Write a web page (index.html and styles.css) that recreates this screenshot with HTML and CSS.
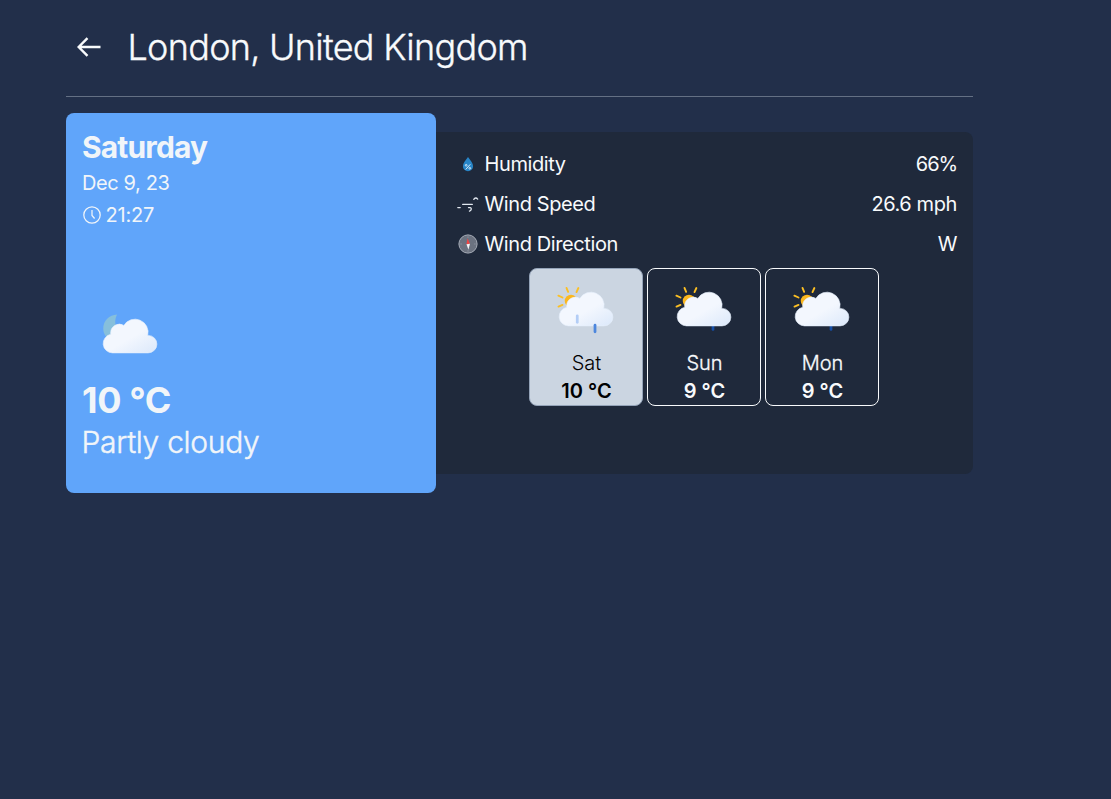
FILE: index.html
```
<!DOCTYPE html>
<html lang="en">
<head>
<meta charset="utf-8">
<title>Weather</title>
<link rel="stylesheet" href="styles.css">
</head>
<body>
<svg class="defs" aria-hidden="true">
  <defs>
    <linearGradient id="cloud-fill" gradientUnits="userSpaceOnUse" x1="22.56" y1="21.96" x2="39.2" y2="50.8">
      <stop offset="0" stop-color="#f3f7fe"/><stop offset=".45" stop-color="#f3f7fe"/><stop offset="1" stop-color="#deeafb"/>
    </linearGradient>
    <symbol id="cloud" viewBox="0 0 64 64">
      <path d="M46.5 31.5h-.32a10.49 10.49 0 0 0-19.11-8 7 7 0 0 0-10.57 6 7.21 7.21 0 0 0 .1 1.14A7.5 7.5 0 0 0 18 45.5h28.5a7 7 0 0 0 0-14z" fill="url(#cloud-fill)" stroke="#e6effc" stroke-width=".5"/>
    </symbol>
    <symbol id="sun" viewBox="0 0 64 64">
      <circle cx="20" cy="25.6" r="5" fill="#fbb71e"/>
      <path d="M17.7 18.3l-1.3-3.2M24.4 18.5l1.5-3.3M13.2 22.8l-3.3-1.5M13.2 28.7l-3.2 1.4" fill="none" stroke="#fbbf24" stroke-width="1.5" stroke-linecap="round"/>
    </symbol>
  </defs>
</svg>
<main class="page">
  <header class="header">
    <svg class="back" viewBox="0 0 24 24"><path d="M23.5 12H1.5M10.500 3.2L1.7 12l8.800 8.800" fill="none" stroke="currentColor" stroke-width="2.400"/></svg>
    <h1 class="title">London, United Kingdom</h1>
  </header>
  <section class="weather">
    <div class="today">
      <div>
        <h2 class="weekday">Saturday</h2>
        <p class="date">Dec 9, 23</p>
        <p class="time"><svg class="clock" viewBox="0 0 20 20" fill="none" stroke="currentColor" stroke-width="1.25"><circle cx="10" cy="10" r="8.2"/><path d="M10 5v5.4l2.6 3.1"/></svg>21:27</p>
      </div>
      <div>
        <svg class="now-icon" viewBox="0 0 64 64">
          <path d="M21.6 14.8C15.4 15.2 10.6 19.8 10.6 26c0 3 1.1 5.4 3 7.2l13-3.2c-5.800-2.500-8.200-8.500-5-15.200z" fill="#86bfdc"/>
          <use href="#cloud"/>
        </svg>
        <p class="temp">10 °C</p>
        <p class="condition">Partly cloudy</p>
      </div>
    </div>
    <div class="details">
      <div class="row"><span class="label"><svg class="icon" viewBox="0 0 24 24"><path d="M12 5C9.500 8.300 6.900 11.500 6.900 14.200a5.100 5.100 0 0 0 10.200 0C17.100 11.500 14.500 8.300 12 5z" fill="#2885c7"/><path d="M14.300 12.300l-4.600 5.200" stroke="#fff" stroke-width=".8"/><circle cx="10.200" cy="13.300" r=".9" fill="none" stroke="#fff" stroke-width=".7"/><circle cx="13.800" cy="16.300" r=".9" fill="none" stroke="#fff" stroke-width=".7"/></svg>Humidity</span><span class="percent">66%</span></div>
      <div class="row"><span class="label"><svg class="icon" viewBox="0 0 24 24" fill="none" stroke="#e2e8f0" stroke-width="1.300" stroke-linecap="round"><path d="M6.700 12.400H16.300M1.800 15.600h2.400M12.500 15.600h1.600c1.700 0 1.600 2.800-.600 3.600M17.800 7.400c1-1.900 2.700-1.700 3.900-.300"/></svg>Wind Speed</span><span>26.6 mph</span></div>
      <div class="row"><span class="label"><svg class="icon" viewBox="0 0 24 24"><circle cx="12" cy="12" r="9.100" fill="#6b7280" stroke="#a7adb8" stroke-width="1"/><path d="M12 4.500v1.200M12 18.300v1.200M4.500 12h1.200M18.300 12h1.200" stroke="#9ca3af" stroke-width=".8"/><path d="M11.500 6.200l2.500 5.600-3.500.500z" fill="#ef4444"/><path d="M12.400 17.800l1.600-6-3.500.500z" fill="#f3f4f6"/></svg>Wind Direction</span><span>W</span></div>
      <div class="forecast">
        <div class="day day-active">
          <svg class="day-icon" viewBox="0 0 64 64"><use href="#sun"/><use href="#cloud"/><path d="M25 37.400v5.200" stroke="#b3cdf6" stroke-width="2.200" stroke-linecap="round"/><path d="M39.200 44.900v5.300" stroke="#4c86dd" stroke-width="2.200" stroke-linecap="round"/></svg>
          <span>Sat</span><strong>10 °C</strong>
        </div>
        <div class="day">
          <svg class="day-icon" viewBox="0 0 64 64"><use href="#sun"/><path d="M39.200 43v5.300" stroke="#154ea6" stroke-width="2.200" stroke-linecap="round"/><use href="#cloud"/></svg>
          <span>Sun</span><strong>9 °C</strong>
        </div>
        <div class="day">
          <svg class="day-icon" viewBox="0 0 64 64"><use href="#sun"/><path d="M39.200 43v5.300" stroke="#154ea6" stroke-width="2.200" stroke-linecap="round"/><use href="#cloud"/></svg>
          <span>Mon</span><strong>9 °C</strong>
        </div>
      </div>
    </div>
  </section>
</main>
</body>
</html>
```
FILE: styles.css
```
* { box-sizing: border-box; margin: 0; }
body { background: #222f4a; color: #f8fafc; font: 300 20px/28px Inter, "Liberation Sans", sans-serif; }
svg { display: block; flex: none; }
.defs { position: absolute; width: 0; height: 0; }
.page { width: 907px; margin-left: 66px; }
.header { display: flex; align-items: center; gap: 26.5px; height: 97px; padding: 0 11px 2px; border-bottom: 1px solid #647084; }
.back { width: 24px; height: 24px; }
.title { font-size: 36px; line-height: 40px; font-weight: 300; letter-spacing: -.72px; -webkit-text-stroke: .35px currentColor; }
.weather { display: flex; align-items: center; margin-top: 16px; }
.today { display: flex; flex-direction: column; justify-content: space-between; width: 370px; height: 380px; padding: 16px 16px 32px; border-radius: 8px; background: #60a5fa; color: #f1f5f9; }
.weekday { font-size: 30px; line-height: 36px; font-weight: 700; letter-spacing: -.85px; }
.date { margin-top: 4px; font-weight: 400; letter-spacing: -.4px; }
.time { display: flex; align-items: center; gap: 3.5px; margin-top: 4px; font-weight: 400; letter-spacing: -.2px; }
.clock { width: 20px; height: 20px; }
.now-icon { width: 80px; height: 80px; margin-left: 8px; }
.temp { margin-top: 4px; font-size: 36px; line-height: 40px; font-weight: 700; letter-spacing: -.35px; }
.condition { margin-top: 3px; margin-left: -.5px; font-size: 30px; line-height: 38px; font-weight: 300; letter-spacing: -.3px; -webkit-text-stroke: .45px currentColor; }
.details { flex: 1; height: 342px; padding: 12px 16px; border-radius: 0 8px 8px 0; background: #1f293b; font-weight: 400; letter-spacing: -.4px; }
.row { display: flex; align-items: center; justify-content: space-between; height: 40px; padding-left: 4px; }
.label { display: flex; align-items: center; gap: 4.5px; }
.percent { letter-spacing: -1.1px; }
.icon { width: 24px; height: 24px; }
.forecast { display: flex; justify-content: center; gap: 4px; margin: 4px 1px 0 0; letter-spacing: 0; }
.day { display: flex; flex-direction: column; align-items: center; width: 114px; height: 138px; border: 1px solid #f8fafc; border-radius: 8px; font-weight: 300; }
.day span, .day strong { padding-left: 1px; }
.day span { -webkit-text-stroke: .3px currentColor; }
.day strong { font-weight: 600; }
.day-active { background: #cbd5e1; border-color: #94a3b8; color: #000; }
.day-active span { -webkit-text-stroke: 0; }
.day-icon { width: 80px; height: 80px; }
```
